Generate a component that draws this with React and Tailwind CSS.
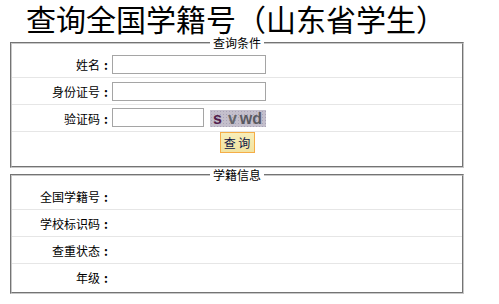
import React from "react";

function Row({ label, children, last }) {
  return (
    <div
      className={
        "flex h-[27px] items-center " +
        (last ? "" : "border-b border-[#e6e6e6]")
      }
    >
      <div className="flex w-[100px] shrink-0 justify-end pt-[1px] text-[12px] leading-[16px] text-black">
        <span>{label}</span>
        <span className="w-[12px] text-center font-bold">:</span>
      </div>
      {children}
    </div>
  );
}

function Captcha() {
  return (
    <div className="ml-[6px] mt-[1px] flex h-[17px] w-[56px] items-center overflow-hidden bg-[#c4bfcc] bg-[radial-gradient(circle,#a9a3b6_0.6px,transparent_0.8px)] bg-[length:3px_3px] font-['Liberation_Sans',sans-serif] text-[16px] font-bold leading-[17px]">
      <span className="ml-[3px] text-[#521d4c]">s</span>
      <span className="ml-[6px] text-[#66666a]">v</span>
      <span className="ml-[3px] text-[#5a5a62]">wd</span>
    </div>
  );
}

export default function App() {
  return (
    <div className="h-[304px] w-[499px] overflow-hidden bg-white font-['Noto_Sans_CJK_SC','Noto_Sans',sans-serif] text-black">
      <h1 className="h-[36px] pl-[26px] text-[30px] font-normal leading-[36px] whitespace-nowrap">
        查询全国学籍号（山东省学生）
      </h1>

      <fieldset className="m-0 ml-[10px] w-[454px] border-2 border-[#c8c8c8] p-0 [--tw-border-style:groove]">
        <legend
          align="center"
          className="mx-auto px-[3px] text-[12px] leading-[14px]"
        >
          查询条件
        </legend>
        <div className="pt-[1px]">
          <Row label="姓名">
            <input
              type="text"
              className="h-[19px] w-[154px] border border-[#a5a5a5] bg-white px-[2px] text-[12px] outline-none"
            />
          </Row>
          <Row label="身份证号">
            <input
              type="text"
              className="h-[19px] w-[154px] border border-[#a5a5a5] bg-white px-[2px] text-[12px] outline-none"
            />
          </Row>
          <Row label="验证码">
            <input
              type="text"
              className="mb-[2px] h-[19px] w-[92px] border border-[#a5a5a5] bg-white px-[2px] text-[12px] outline-none"
            />
            <Captcha />
          </Row>
          <div className="flex h-[34px] items-start justify-center">
            <button
              type="button"
              className="flex h-[21px] w-[35px] items-center justify-center border border-[#f5ad47] bg-[linear-gradient(#f7edb9,#f1e3a0)] text-[12px] leading-[14px] text-[#0a1446]"
            >
              查 询
            </button>
          </div>
        </div>
      </fieldset>

      <fieldset className="m-0 ml-[10px] w-[454px] border-2 border-[#c8c8c8] p-0 [--tw-border-style:groove]">
        <legend
          align="center"
          className="mx-auto px-[3px] text-[12px] leading-[14px]"
        >
          学籍信息
        </legend>
        <div className="pt-[1px] pb-[1px]">
          <Row label="全国学籍号" />
          <Row label="学校标识码" />
          <Row label="查重状态" />
          <Row label="年级" last />
        </div>
      </fieldset>
    </div>
  );
}
